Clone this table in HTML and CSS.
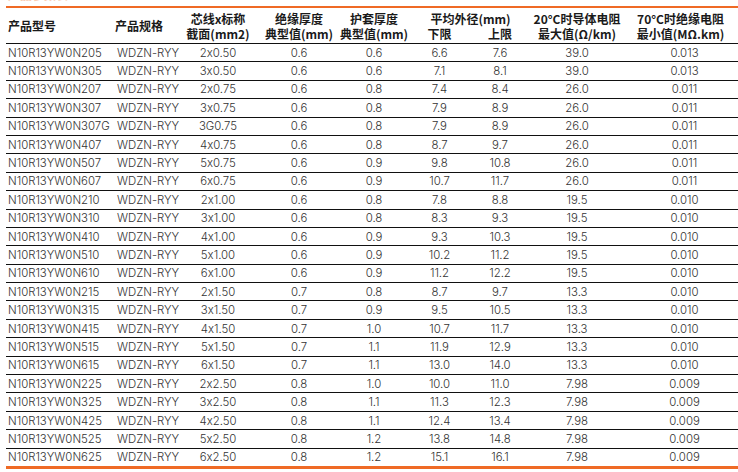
FILE: index.html
```html
<!DOCTYPE html>
<html lang="zh">
<head>
<meta charset="utf-8">
<title>产品参数</title>
<link rel="stylesheet" href="styles.css">
</head>
<body>
<div class="page">
  <div class="title"><span>产品参数表</span></div>
  <table class="spec">
    <colgroup>
      <col class="c1"><col class="c2"><col class="c3"><col class="c4"><col class="c5"><col class="c6a"><col class="c6b"><col class="c7"><col class="c8">
    </colgroup>
    <thead>
      <tr>
        <th class="l">产品型号</th>
        <th class="l">产品规格</th>
        <th><div class="ln">芯线x标称</div><div class="ln">截面(mm2)</div></th>
        <th><div class="ln">绝缘厚度</div><div class="ln">典型值(mm)</div></th>
        <th><div class="ln">护套厚度</div><div class="ln">典型值(mm)</div></th>
        <th colspan="2"><div class="ln">平均外径(mm)</div><div class="ln sub"><span class="a">下限</span><span class="b">上限</span></div></th>
        <th><div class="ln">20°C时导体电阻</div><div class="ln">最大值(Ω/km)</div></th>
        <th><div class="ln">70°C时绝缘电阻</div><div class="ln">最小值(MΩ.km)</div></th>
      </tr>
    </thead>
    <tbody>
      <tr><td class="l">N10R13YW0N205</td><td class="l2">WDZN-RYY</td><td>2x0.50</td><td>0.6</td><td>0.6</td><td>6.6</td><td>7.6</td><td>39.0</td><td class="r">0.013</td></tr>
      <tr><td class="l">N10R13YW0N305</td><td class="l2">WDZN-RYY</td><td>3x0.50</td><td>0.6</td><td>0.6</td><td>7.1</td><td>8.1</td><td>39.0</td><td class="r">0.013</td></tr>
      <tr><td class="l">N10R13YW0N207</td><td class="l2">WDZN-RYY</td><td>2x0.75</td><td>0.6</td><td>0.8</td><td>7.4</td><td>8.4</td><td>26.0</td><td class="r">0.011</td></tr>
      <tr><td class="l">N10R13YW0N307</td><td class="l2">WDZN-RYY</td><td>3x0.75</td><td>0.6</td><td>0.8</td><td>7.9</td><td>8.9</td><td>26.0</td><td class="r">0.011</td></tr>
      <tr><td class="l">N10R13YW0N307G</td><td class="l2">WDZN-RYY</td><td>3G0.75</td><td>0.6</td><td>0.8</td><td>7.9</td><td>8.9</td><td>26.0</td><td class="r">0.011</td></tr>
      <tr><td class="l">N10R13YW0N407</td><td class="l2">WDZN-RYY</td><td>4x0.75</td><td>0.6</td><td>0.8</td><td>8.7</td><td>9.7</td><td>26.0</td><td class="r">0.011</td></tr>
      <tr><td class="l">N10R13YW0N507</td><td class="l2">WDZN-RYY</td><td>5x0.75</td><td>0.6</td><td>0.9</td><td>9.8</td><td>10.8</td><td>26.0</td><td class="r">0.011</td></tr>
      <tr><td class="l">N10R13YW0N607</td><td class="l2">WDZN-RYY</td><td>6x0.75</td><td>0.6</td><td>0.9</td><td>10.7</td><td>11.7</td><td>26.0</td><td class="r">0.011</td></tr>
      <tr><td class="l">N10R13YW0N210</td><td class="l2">WDZN-RYY</td><td>2x1.00</td><td>0.6</td><td>0.8</td><td>7.8</td><td>8.8</td><td>19.5</td><td class="r">0.010</td></tr>
      <tr><td class="l">N10R13YW0N310</td><td class="l2">WDZN-RYY</td><td>3x1.00</td><td>0.6</td><td>0.8</td><td>8.3</td><td>9.3</td><td>19.5</td><td class="r">0.010</td></tr>
      <tr><td class="l">N10R13YW0N410</td><td class="l2">WDZN-RYY</td><td>4x1.00</td><td>0.6</td><td>0.9</td><td>9.3</td><td>10.3</td><td>19.5</td><td class="r">0.010</td></tr>
      <tr><td class="l">N10R13YW0N510</td><td class="l2">WDZN-RYY</td><td>5x1.00</td><td>0.6</td><td>0.9</td><td>10.2</td><td>11.2</td><td>19.5</td><td class="r">0.010</td></tr>
      <tr><td class="l">N10R13YW0N610</td><td class="l2">WDZN-RYY</td><td>6x1.00</td><td>0.6</td><td>0.9</td><td>11.2</td><td>12.2</td><td>19.5</td><td class="r">0.010</td></tr>
      <tr><td class="l">N10R13YW0N215</td><td class="l2">WDZN-RYY</td><td>2x1.50</td><td>0.7</td><td>0.8</td><td>8.7</td><td>9.7</td><td>13.3</td><td class="r">0.010</td></tr>
      <tr><td class="l">N10R13YW0N315</td><td class="l2">WDZN-RYY</td><td>3x1.50</td><td>0.7</td><td>0.9</td><td>9.5</td><td>10.5</td><td>13.3</td><td class="r">0.010</td></tr>
      <tr><td class="l">N10R13YW0N415</td><td class="l2">WDZN-RYY</td><td>4x1.50</td><td>0.7</td><td>1.0</td><td>10.7</td><td>11.7</td><td>13.3</td><td class="r">0.010</td></tr>
      <tr><td class="l">N10R13YW0N515</td><td class="l2">WDZN-RYY</td><td>5x1.50</td><td>0.7</td><td>1.1</td><td>11.9</td><td>12.9</td><td>13.3</td><td class="r">0.010</td></tr>
      <tr><td class="l">N10R13YW0N615</td><td class="l2">WDZN-RYY</td><td>6x1.50</td><td>0.7</td><td>1.1</td><td>13.0</td><td>14.0</td><td>13.3</td><td class="r">0.010</td></tr>
      <tr><td class="l">N10R13YW0N225</td><td class="l2">WDZN-RYY</td><td>2x2.50</td><td>0.8</td><td>1.0</td><td>10.0</td><td>11.0</td><td>7.98</td><td class="r">0.009</td></tr>
      <tr><td class="l">N10R13YW0N325</td><td class="l2">WDZN-RYY</td><td>3x2.50</td><td>0.8</td><td>1.1</td><td>11.3</td><td>12.3</td><td>7.98</td><td class="r">0.009</td></tr>
      <tr><td class="l">N10R13YW0N425</td><td class="l2">WDZN-RYY</td><td>4x2.50</td><td>0.8</td><td>1.1</td><td>12.4</td><td>13.4</td><td>7.98</td><td class="r">0.009</td></tr>
      <tr><td class="l">N10R13YW0N525</td><td class="l2">WDZN-RYY</td><td>5x2.50</td><td>0.8</td><td>1.2</td><td>13.8</td><td>14.8</td><td>7.98</td><td class="r">0.009</td></tr>
      <tr><td class="l">N10R13YW0N625</td><td class="l2">WDZN-RYY</td><td>6x2.50</td><td>0.8</td><td>1.2</td><td>15.1</td><td>16.1</td><td>7.98</td><td class="r">0.009</td></tr>
    </tbody>
  </table>
</div>
</body>
</html>
```
FILE: styles.css
```css
html, body {
  margin: 0;
  padding: 0;
  background: #ffffff;
}
.page {
  padding-left: 6px;
  width: 732px;
  font-family: Inter, "Noto Sans CJK SC", sans-serif;
  font-feature-settings: "calt" 0;
}
.title {
  height: 6px;
  overflow: hidden;
}
.title span {
  display: block;
  margin-top: -11px;
  padding-left: 2px;
  font-size: 12px;
  line-height: 14px;
  font-weight: 700;
  color: #f9cdb3;
}
.spec {
  width: 732px;
  table-layout: fixed;
  border-collapse: collapse;
  border-top: 2px solid #ef6a25;
  border-bottom: 3px solid #ef6a25;
}
.c1 { width: 106px; }
.c2 { width: 64px; }
.c3 { width: 84px; }
.c4 { width: 78px; }
.c5 { width: 72px; }
.c6a { width: 59px; }
.c6b { width: 62px; }
.c7 { width: 92px; }
.c8 { width: 115px; }
.spec th {
  height: 35px;
  padding: 0;
  font-family: "Noto Sans CJK SC", sans-serif;
  font-size: 12px;
  line-height: 15px;
  font-weight: 700;
  color: #1a1a1a;
  text-align: center;
  vertical-align: middle;
  border-bottom: 1px solid #111;
  white-space: nowrap;
}
.ln {
  height: 15px;
  line-height: 15px;
}
.spec th.l {
  text-align: left;
  padding-left: 2px;
}
.spec th.l + th.l {
  padding-left: 3px;
}
.sub {
  display: flex;
}
.sub .a {
  flex: 0 0 59px;
  text-align: center;
}
.sub .b {
  flex: 0 0 62px;
  text-align: center;
}
.spec td {
  height: 17.4px;
  padding: 0;
  font-size: 11.4px;
  line-height: 14px;
  font-weight: 300;
  color: #333;
  text-align: center;
  vertical-align: middle;
  border-bottom: 1px solid #111;
  white-space: nowrap;
}
.spec td.l {
  text-align: left;
  padding-left: 2px;
}
.spec td.l2 {
  text-align: left;
  padding-left: 5px;
}
.spec td.r {
  padding-left: 8px;
}
.spec tbody tr:last-child td {
  border-bottom: none;
}
```
